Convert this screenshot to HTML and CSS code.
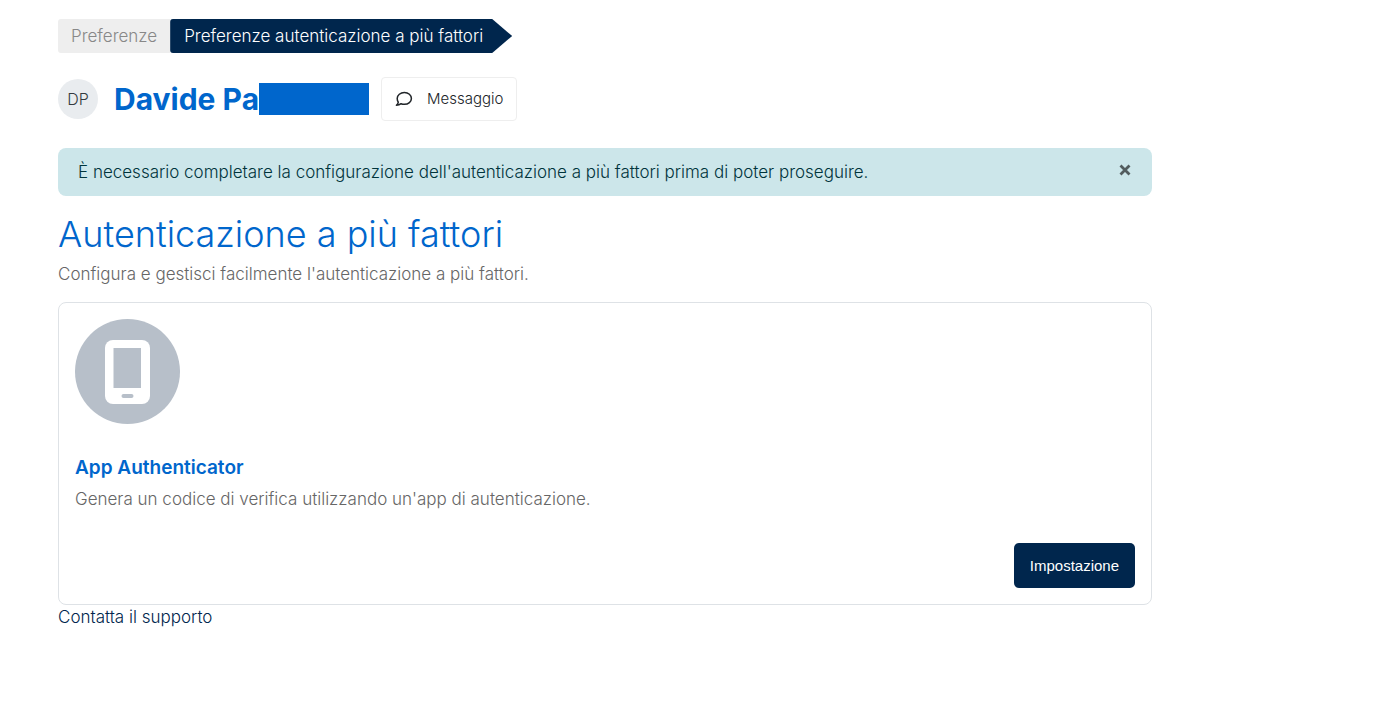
FILE: index.html
```html
<!DOCTYPE html>
<html lang="it">
<head>
    <meta charset="UTF-8">
    <meta name="viewport" content="width=device-width, initial-scale=1.0">
    <title>Preferenze autenticazione a più fattori</title>
    <link rel="stylesheet" href="styles.css">
</head>
<body>
    <div class="page">
        <nav aria-label="Percorso">
            <ol class="breadcrumb">
                <li><a href="#">Preferenze</a></li>
                <li class="current"><a href="#" aria-current="page">Preferenze autenticazione a più fattori</a></li>
            </ol>
        </nav>

        <header class="user-header">
            <span class="avatar">DP</span>
            <h1>Davide Pa<span class="hidden-name"></span></h1>
            <button type="button" class="btn-message">
                <svg width="18" height="16" viewBox="0 0 18 16" fill="none" stroke="currentColor" stroke-width="1.5" stroke-linejoin="round" aria-hidden="true">
                    <path d="M9.4 1.5c4 0 7 2.6 7 5.9s-3 5.9-7 5.9c-1.200 0-2.300-.2-3.300-.6-1.200 1-2.800 1.600-4.700 1.600 1-.9 1.700-2 1.900-3.200C2.600 10.100 2.200 8.800 2.200 7.400c0-3.300 3.200-5.900 7.200-5.900z"/>
                </svg>
                Messaggio
            </button>
        </header>

        <main>
            <div class="alert" role="alert">
                <p>È necessario completare la configurazione dell'autenticazione a più fattori prima di poter proseguire.</p>
                <button type="button" class="close" aria-label="Chiudi">
                    <svg width="12" height="12" viewBox="0 0 12 12" stroke="currentColor" stroke-width="2.8" aria-hidden="true">
                        <path d="M1.5 1.5l9 9M10.5 1.5l-9 9"/>
                    </svg>
                </button>
            </div>

            <h2>Autenticazione a più fattori</h2>
            <p class="intro">Configura e gestisci facilmente l'autenticazione a più fattori.</p>

            <section class="card">
                <svg class="factor-icon" width="105" height="105" viewBox="0 0 105 105" aria-hidden="true">
                    <circle cx="52.5" cy="52.5" r="52.5" fill="#b7bfc9"/>
                    <rect x="30" y="21" width="45" height="64" rx="8" fill="#fff"/>
                    <rect x="38.5" y="29" width="27.5" height="40" fill="#b7bfc9"/>
                    <rect x="46.5" y="75" width="12" height="4" rx="2" fill="#b7bfc9"/>
                </svg>
                <h3>App Authenticator</h3>
                <p>Genera un codice di verifica utilizzando un'app di autenticazione.</p>
                <div class="card-actions">
                    <button type="button" class="btn-primary">Impostazione</button>
                </div>
            </section>
            <a class="support" href="#">Contatta il supporto</a>
        </main>
    </div>
</body>
</html>
```

FILE: styles.css
```css
* {
    box-sizing: border-box;
}
body {
    margin: 0;
    background: #fff;
    color: #666;
    font-family: "Century Gothic", Inter, sans-serif;
    font-size: 17px;
    font-weight: 300;
    line-height: 24px;
}
h1, h2, h3, p {
    margin: 0;
}
button {
    font: inherit;
    cursor: pointer;
}
a {
    color: inherit;
    text-decoration: none;
}
.page {
    margin: 19px 17% 40px 58px;
}

/* breadcrumb */
.breadcrumb {
    display: flex;
    margin: 0;
    padding: 0;
    list-style: none;
    line-height: 34px;
}
.breadcrumb a {
    display: block;
    padding: 0 13px;
    border-radius: 3px 0 0 3px;
    background: #eee;
    color: #888;
}
.breadcrumb .current a {
    padding: 0 29px 0 14px;
    background: #00264d;
    color: #fff;
    clip-path: polygon(0 0, calc(100% - 20px) 0, 100% 50%, calc(100% - 20px) 100%, 0 100%);
}

/* user */
.user-header {
    display: flex;
    align-items: center;
    margin: 24px 0 27px;
}
.avatar {
    width: 40px;
    height: 40px;
    margin-right: 16px;
    border-radius: 50%;
    background: #e9ecef;
    color: #343a40;
    font-size: 16px;
    line-height: 40px;
    text-align: center;
}
h1 {
    display: flex;
    align-items: center;
    margin-right: 12px;
    color: #06c;
    font-size: 30px;
    font-weight: 700;
    line-height: 36px;
}
.hidden-name {
    width: 110px;
    height: 32px;
    background: #06c;
}
.btn-message {
    display: flex;
    align-items: center;
    gap: 14px;
    height: 44px;
    padding: 0 13px;
    border: 1px solid #eee;
    border-radius: 4px;
    background: #fff;
    color: #212529;
    font-size: 15px;
}

/* alert */
.alert {
    display: flex;
    justify-content: space-between;
    padding: 12px 20px;
    border-radius: 8px;
    background: #cce6ea;
    color: #00343c;
}
.close {
    display: flex;
    align-items: center;
    height: 20px;
    padding: 0 1px;
    border: 0;
    background: none;
    color: #525c5e;
}

h2 {
    margin: 17px 0 7px;
    color: #06c;
    font-size: 36px;
    font-weight: 300;
    line-height: 42px;
}

/* factor card */
.card {
    margin-top: 16px;
    padding: 16px;
    border: 1px solid #dee2e6;
    border-radius: 8px;
}
.factor-icon {
    display: block;
}
h3 {
    margin: 32px 0 7px;
    color: #06c;
    font-size: 19px;
    font-weight: 600;
    line-height: 24px;
}
.card-actions {
    display: flex;
    justify-content: flex-end;
    margin-top: 32px;
}
.btn-primary {
    height: 45px;
    padding: 0 16px;
    border: 0;
    border-radius: 5px;
    background: #00264d;
    color: #fff;
    font-family: "Liberation Sans", Arial, sans-serif;
    font-size: 15px;
    font-weight: 400;
}
.support {
    color: #00264d;
}
```
